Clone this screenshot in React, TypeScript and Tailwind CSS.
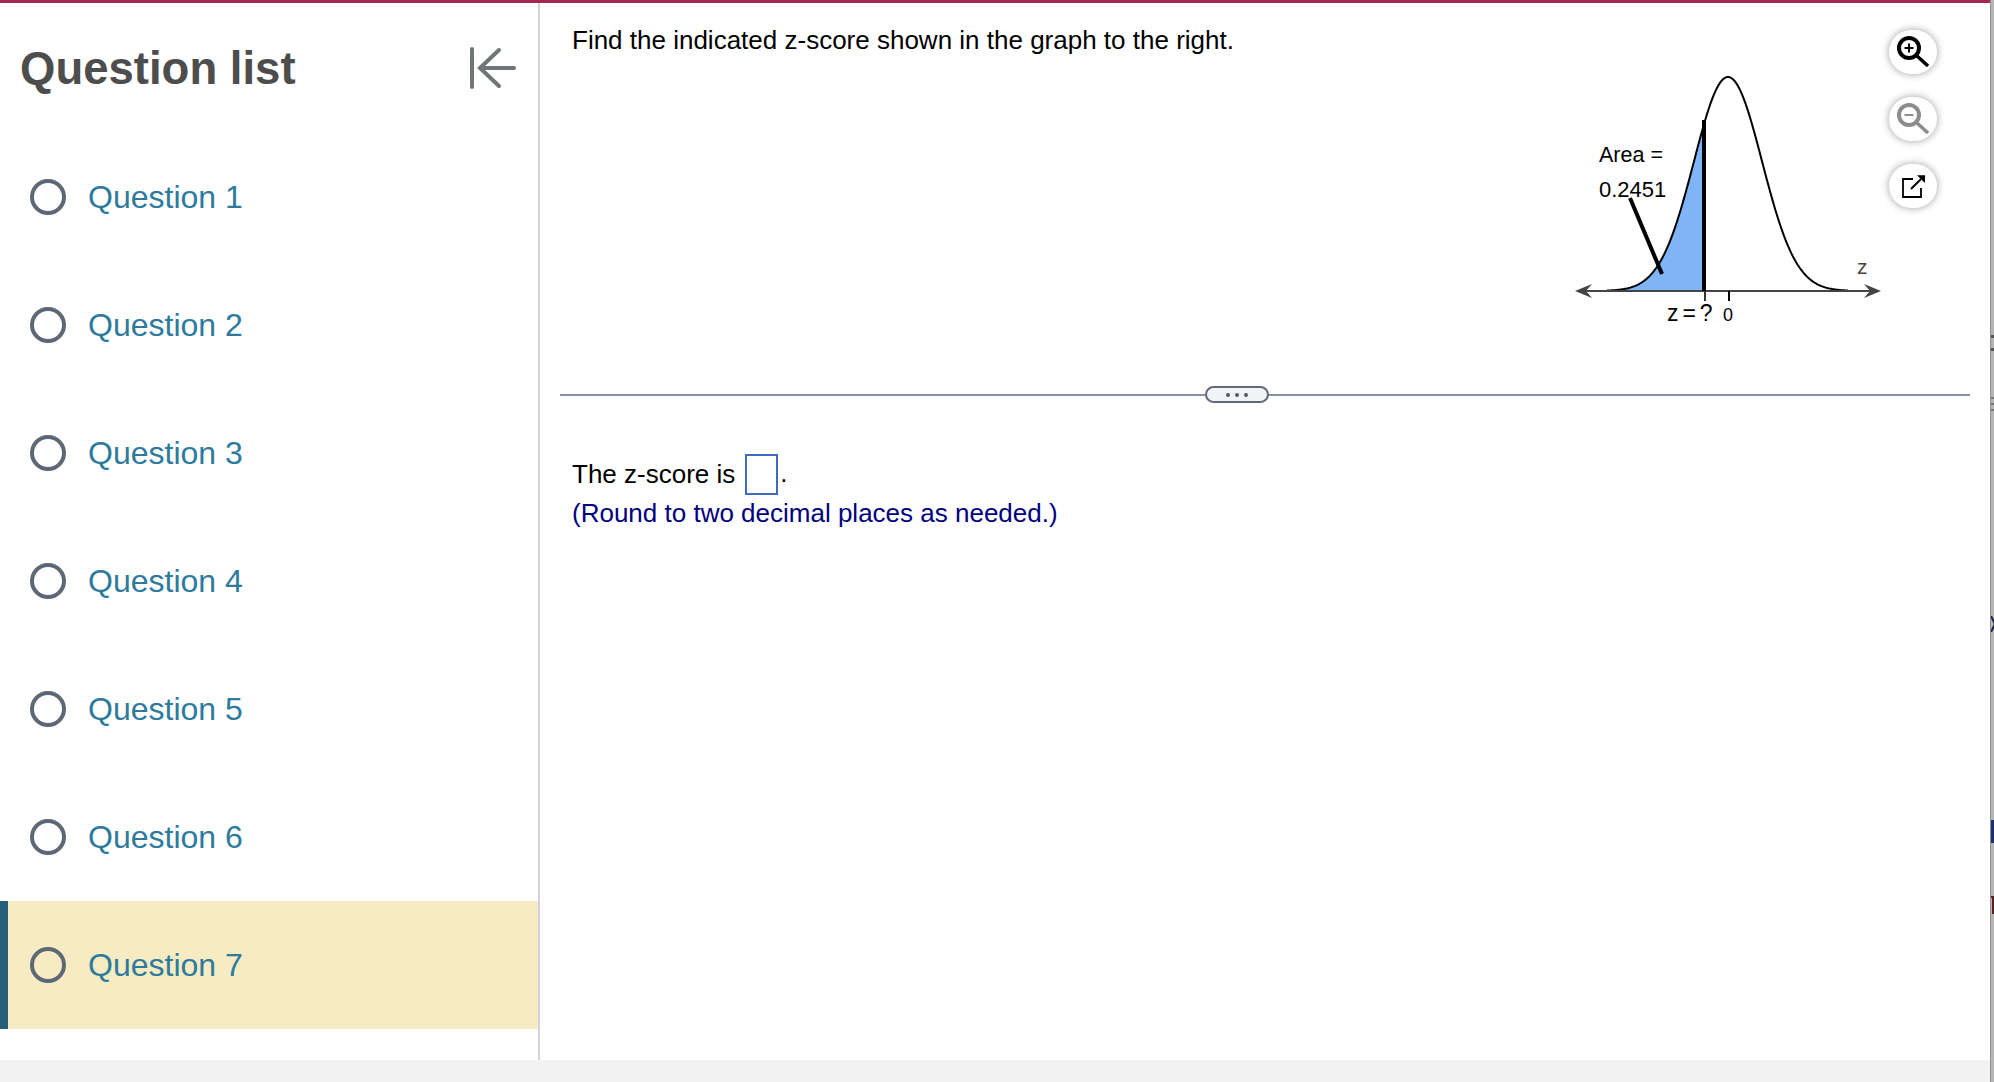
import React from 'react';

const questions = [1, 2, 3, 4, 5, 6, 7];

// normal curve, page coordinates
const axisY = 291;
const peakX = 1728;
const peakH = 214;
const sigma = 34;
function curveY(x: number) {
  const d = x - peakX;
  return axisY - peakH * Math.exp(-(d * d) / (2 * sigma * sigma));
}
function curvePoints(from: number, to: number) {
  const pts: string[] = [];
  for (let x = from; x <= to; x += 1) pts.push(`${x},${curveY(x).toFixed(2)}`);
  return pts;
}

function NormalGraph() {
  const whole = curvePoints(1607, 1848).join(' ');
  const shaded = [...curvePoints(1607, 1704), `1704,${axisY}`, `1607,${axisY}`].join(' ');
  return (
    <svg width="320" height="337" viewBox="1569 3 320 337" className="shrink-0">
      <polygon points={shaded} fill="#7fb5f7" />
      <polyline points={whole} fill="none" stroke="#000" strokeWidth="2" />
      <line x1="1580" y1={axisY} x2="1876" y2={axisY} stroke="#444" strokeWidth="2" />
      <polygon points="1575,291 1592,284 1586,291 1592,298" fill="#444" />
      <polygon points="1881,291 1864,284 1870,291 1864,298" fill="#444" />
      <line x1="1704" y1="120" x2="1704" y2="291" stroke="#000" strokeWidth="4" />
      <line x1="1705" y1="291" x2="1705" y2="301" stroke="#333" strokeWidth="2" />
      <line x1="1729" y1="291" x2="1729" y2="301" stroke="#000" strokeWidth="2" />
      <line x1="1630" y1="198" x2="1662" y2="274" stroke="#000" strokeWidth="4" />
      <text x="1599" y="162" fontSize="21.5" fill="#000">Area =</text>
      <text x="1599" y="197" fontSize="22" fill="#000">0.2451</text>
      <text x="1667" y="321" fontSize="23" wordSpacing="-2.5" fill="#000">z = ?</text>
      <text x="1723" y="321" fontSize="18" fill="#000">0</text>
      <text x="1857" y="274" fontSize="21" fill="#444">z</text>
    </svg>
  );
}

function ToolButton({ dim, children }: { dim?: boolean; children: React.ReactNode }) {
  return (
    <button className="w-[48px] h-[44px] rounded-full bg-white flex items-center justify-center shadow-[0_0_7px_1px_rgba(0,0,0,0.3)]">
      <svg width="34" height="34" viewBox="0 0 34 34" fill="none" stroke={dim ? '#8c8c8c' : '#000'} strokeWidth="2.5">
        {children}
      </svg>
    </button>
  );
}

export default function App() {
  return (
    <div className="h-screen w-full flex overflow-hidden bg-white font-['Liberation_Sans',sans-serif]">
      <div className="flex-1 flex flex-col min-w-0">
        <div className="h-[3px] shrink-0 bg-[#a4264f]" />

        <div className="flex-1 flex min-h-0">
          {/* Sidebar */}
          <div className="w-[540px] shrink-0 border-r-2 border-[#d0d3e0] flex flex-col">
            <div className="h-[130px] shrink-0 flex items-start justify-between pl-[20px] pr-[22px]">
              <h1 className="mt-[40px] text-[45.5px] leading-[52px] font-bold text-[#4d4d4d]">Question list</h1>
              <svg width="46" height="42" viewBox="0 0 46 42" fill="none" stroke="#707577" strokeWidth="4" strokeLinecap="round" className="mt-[44px]">
                <line x1="2" y1="2" x2="2" y2="40" />
                <line x1="11" y1="21" x2="44" y2="21" />
                <polyline points="29,3 10,21 29,39" />
              </svg>
            </div>
            {questions.map((q) => (
              <div
                key={q}
                className={
                  q === 7
                    ? 'h-[128px] shrink-0 flex items-center pl-[22px] gap-[22px] bg-[#f7ebc4] border-l-[8px] border-[#255f78]'
                    : 'h-[128px] shrink-0 flex items-center pl-[30px] gap-[22px]'
                }
              >
                <span className="w-[36px] h-[36px] rounded-full border-[4px] border-[#5c6875] shrink-0" />
                <span className="text-[32px] text-[#2e7a9c]">Question {q}</span>
              </div>
            ))}
          </div>

          {/* Question */}
          <div className="flex-1 flex flex-col min-w-0">
            <div className="h-[391px] shrink-0 flex items-start pl-[32px] pr-[53px]">
              <p className="flex-1 mt-[21px] text-[26px] leading-[32px] text-black">
                Find the indicated z-score shown in the graph to the right.
              </p>
              <NormalGraph />
              <div className="w-[48px] shrink-0 mt-[27px] flex flex-col gap-[23px]">
                <ToolButton>
                  <circle cx="13" cy="13" r="10" strokeWidth="4" />
                  <line x1="21" y1="21" x2="32" y2="31" strokeWidth="3.5" />
                  <line x1="8.5" y1="13" x2="17.5" y2="13" strokeWidth="2" />
                  <line x1="13" y1="8.5" x2="13" y2="17.5" strokeWidth="2" />
                </ToolButton>
                <ToolButton dim>
                  <circle cx="13" cy="13" r="10" strokeWidth="4" />
                  <line x1="21" y1="21" x2="32" y2="31" strokeWidth="3.5" />
                  <line x1="8.5" y1="13" x2="17.5" y2="13" strokeWidth="2" />
                </ToolButton>
                <ToolButton>
                  <polyline points="17,10 7,10 7,28 25,28 25,19" strokeWidth="1.8" />
                  <line x1="15" y1="20" x2="25" y2="10" strokeWidth="2" />
                  <polygon points="21,6.3 29,6.3 29,14" fill="#000" stroke="none" />
                </ToolButton>
              </div>
            </div>

            {/* Divider */}
            <div className="ml-[20px] mr-[20px] h-[2px] shrink-0 bg-[#8a8fa3] relative">
              <div className="absolute left-[645px] top-[-8px] w-[64px] h-[17px] rounded-full border-2 border-[#5f6b7a] bg-[#f3f4f6] flex items-center justify-center gap-[5px]">
                <span className="w-[4px] h-[4px] rounded-full bg-[#4f5d6c]" />
                <span className="w-[4px] h-[4px] rounded-full bg-[#4f5d6c]" />
                <span className="w-[4px] h-[4px] rounded-full bg-[#4f5d6c]" />
              </div>
            </div>

            <div className="pl-[32px] pt-[57px]">
              <div className="flex items-center h-[42px] text-[26px] text-black">
                <span>The z-score is</span>
                <span className="ml-[10px] w-[33px] h-[41px] border-2 border-[#4069c4]" />
                <span className="ml-[2px] self-end mb-[2px]">.</span>
              </div>
              <p className="text-[26px] leading-[36px] text-[#00007f]">(Round to two decimal places as needed.)</p>
            </div>
          </div>
        </div>

        <div className="h-[22px] shrink-0 bg-[#f2f2f2]" />
      </div>

      {/* Edge of the window behind */}
      <div className="w-[4px] shrink-0 bg-[#b5b5b5] border-l border-[#8f8f8f] relative">
        <span className="absolute left-0 top-[335px] w-[4px] h-[3px] bg-[#555]" />
        <span className="absolute left-0 top-[348px] w-[4px] h-[3px] bg-[#555]" />
        <span className="absolute left-0 top-[397px] w-[4px] h-[2px] bg-[#777]" />
        <span className="absolute left-0 top-[403px] w-[4px] h-[2px] bg-[#777]" />
        <span className="absolute left-0 top-[409px] w-[4px] h-[2px] bg-[#777]" />
        <svg width="4" height="16" viewBox="0 0 4 16" fill="none" stroke="#12204a" strokeWidth="2" className="absolute left-0 top-[616px]">
          <polyline points="0,0 4,8 0,16" />
        </svg>
        <span className="absolute left-0 top-[820px] w-[4px] h-[23px] bg-[#1c2f6e]" />
        <span className="absolute left-0 top-[896px] w-[4px] h-[2px] bg-[#5a1f1f]" />
        <span className="absolute left-[1px] top-[896px] w-[2px] h-[18px] bg-[#5a1f1f]" />
      </div>
    </div>
  );
}
